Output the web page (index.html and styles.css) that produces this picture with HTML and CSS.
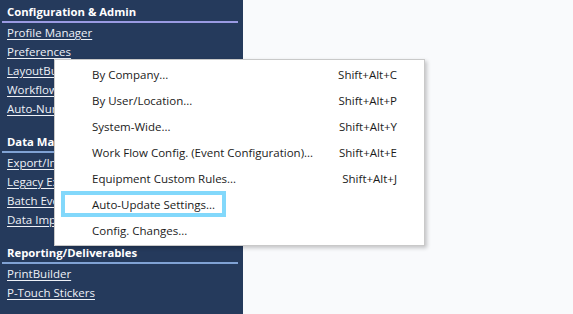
FILE: index.html
```html
<!DOCTYPE html>
<html lang="en">
<head>
    <meta charset="UTF-8">
    <title>Admin Menu</title>
    <link rel="stylesheet" href="styles.css">
</head>
<body>
    <!-- Sidebar -->
    <nav class="sidebar">
        <div class="section">
            <h3 class="section-title first">Configuration &amp; Admin</h3>
            <a href="#">Profile Manager</a>
            <a href="#">Preferences</a>
            <a href="#">LayoutBuilder</a>
            <a href="#">Workflow Builder</a>
            <a href="#">Auto-Numbering</a>
        </div>
        <div class="section">
            <h3 class="section-title">Data Management</h3>
            <a href="#">Export/Import</a>
            <a href="#">Legacy Export</a>
            <a href="#">Batch Events</a>
            <a href="#">Data Import</a>
        </div>
        <div class="section">
            <h3 class="section-title">Reporting/Deliverables</h3>
            <a href="#">PrintBuilder</a>
            <a href="#">P-Touch Stickers</a>
        </div>
    </nav>

    <!-- Main area -->
    <main class="main"></main>

    <!-- Preferences popup menu -->
    <ul class="popup-menu">
        <li><span>By Company...</span><span class="key">Shift+Alt+C</span></li>
        <li><span>By User/Location...</span><span class="key">Shift+Alt+P</span></li>
        <li><span>System-Wide...</span><span class="key">Shift+Alt+Y</span></li>
        <li><span>Work Flow Config. (Event Configuration)...</span><span class="key">Shift+Alt+E</span></li>
        <li><span>Equipment Custom Rules...</span><span class="key">Shift+Alt+J</span></li>
        <li class="marked"><span>Auto-Update Settings...</span><span class="key"></span></li>
        <li><span>Config. Changes...</span><span class="key"></span></li>
    </ul>
</body>
</html>
```

FILE: styles.css
```css
body {
    margin: 0;
    height: 314px;
    display: flex;
    font-family: "Open Sans", "Noto Sans", sans-serif;
    font-size: 11.5px;
    background-color: #f9fafc;
    overflow: hidden;
    position: relative;
}

.sidebar {
    width: 243px;
    background-color: #253a5c;
    padding: 2px 5px 0 2px;
    box-sizing: border-box;
}
.section {
    margin-bottom: 14px;
}
.section-title {
    margin: 0;
    padding-left: 5px;
    line-height: 19px;
    font-size: 11.3px;
    font-weight: bold;
    color: #ffffff;
    border-bottom: 2px solid #80a2d4;
}
.section-title.first {
    border-bottom-color: #9a9ae2;
}
.section a {
    display: block;
    padding-left: 5px;
    line-height: 19px;
    color: #eef1f7;
    text-underline-offset: 2px;
}

.main {
    flex: 1;
}

.popup-menu {
    position: absolute;
    left: 54px;
    top: 59px;
    width: 371px;
    margin: 0;
    padding: 2px 0 1px;
    list-style: none;
    background-color: #ffffff;
    border: 1px solid #c9c9c9;
    box-sizing: border-box;
    box-shadow: 2px 2px 4px rgba(0, 0, 0, 0.22);
    color: #1b1b1b;
}
.popup-menu li {
    position: relative;
    display: flex;
    justify-content: space-between;
    height: 26px;
    line-height: 26px;
    padding: 0 27px 0 37px;
}
.popup-menu .marked::before {
    content: "";
    position: absolute;
    left: 6px;
    top: -1px;
    width: 157px;
    height: 18px;
    border: 4px solid #82d8fb;
}
.popup-menu .marked span {
    position: relative;
}
```
